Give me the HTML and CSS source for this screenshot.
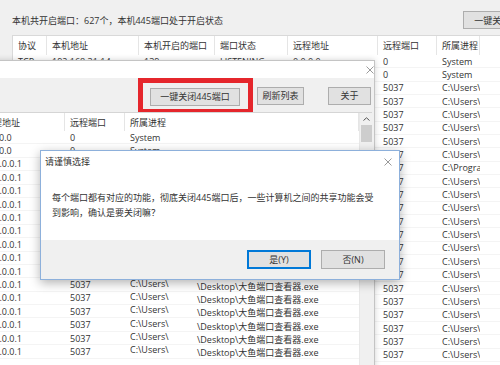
FILE: index.html
```html
<!DOCTYPE html>
<html>
<head>
  <meta charset="utf-8">
  <link rel="stylesheet" href="styles.css">
</head>
<body>
  <!-- Main window (behind) -->
  <div class="main">
    <div class="topbar">
      <div class="summary">本机共开启端口：627个，本机445端口处于开启状态</div>
      <button class="btn top-btn">一键关闭445端口</button>
    </div>
    <div class="ports">
      <div class="row head">
        <div>协议</div><div>本机地址</div><div>本机开启的端口</div><div>端口状态</div><div>远程地址</div><div>远程端口</div><div>所属进程</div><div></div>
      </div>
      <div class="row"><div>TCP</div><div>192.168.31.14</div><div>139</div><div>LISTENING</div><div>0.0.0.0</div><div>0</div><div>System</div><div></div></div>
      <div class="row"><div>TCP</div><div>0.0.0.0</div><div>135</div><div>LISTENING</div><div>0.0.0.0</div><div>0</div><div>System</div><div></div></div>
      <div class="row"><div>TCP</div><div>127.0.0.1</div><div>50112</div><div>ESTABLISHED</div><div>127.0.0.1</div><div>5037</div><div>C:\Users\</div><div></div></div>
      <div class="row"><div>TCP</div><div>127.0.0.1</div><div>50114</div><div>ESTABLISHED</div><div>127.0.0.1</div><div>5037</div><div>C:\Users\</div><div></div></div>
      <div class="row"><div>TCP</div><div>127.0.0.1</div><div>50117</div><div>ESTABLISHED</div><div>127.0.0.1</div><div>5037</div><div>C:\Users\</div><div></div></div>
      <div class="row"><div>TCP</div><div>127.0.0.1</div><div>50121</div><div>ESTABLISHED</div><div>127.0.0.1</div><div>5037</div><div>C:\Users\</div><div></div></div>
      <div class="row"><div>TCP</div><div>127.0.0.1</div><div>50125</div><div>ESTABLISHED</div><div>127.0.0.1</div><div>5037</div><div>C:\Users\</div><div></div></div>
      <div class="row"><div>TCP</div><div>127.0.0.1</div><div>50128</div><div>ESTABLISHED</div><div>127.0.0.1</div><div>5037</div><div>C:\Users\</div><div></div></div>
      <div class="row"><div>TCP</div><div>127.0.0.1</div><div>50133</div><div>ESTABLISHED</div><div>127.0.0.1</div><div>5037</div><div>C:\Program Files\</div><div></div></div>
      <div class="row"><div>TCP</div><div>127.0.0.1</div><div>50136</div><div>ESTABLISHED</div><div>127.0.0.1</div><div>5037</div><div>C:\Users\</div><div></div></div>
      <div class="row"><div>TCP</div><div>127.0.0.1</div><div>50140</div><div>ESTABLISHED</div><div>127.0.0.1</div><div>5037</div><div>C:\Users\</div><div></div></div>
      <div class="row"><div>TCP</div><div>127.0.0.1</div><div>50143</div><div>ESTABLISHED</div><div>127.0.0.1</div><div>5037</div><div>C:\Users\</div><div></div></div>
      <div class="row"><div>TCP</div><div>127.0.0.1</div><div>50147</div><div>ESTABLISHED</div><div>127.0.0.1</div><div>5037</div><div>C:\Users\</div><div></div></div>
      <div class="row"><div>TCP</div><div>127.0.0.1</div><div>50150</div><div>ESTABLISHED</div><div>127.0.0.1</div><div>5037</div><div>C:\Users\</div><div></div></div>
      <div class="row"><div>TCP</div><div>127.0.0.1</div><div>50154</div><div>ESTABLISHED</div><div>127.0.0.1</div><div>5037</div><div>C:\Users\</div><div></div></div>
      <div class="row"><div>TCP</div><div>127.0.0.1</div><div>50158</div><div>ESTABLISHED</div><div>127.0.0.1</div><div>5037</div><div>C:\Users\</div><div></div></div>
      <div class="row"><div>TCP</div><div>127.0.0.1</div><div>50161</div><div>ESTABLISHED</div><div>127.0.0.1</div><div>5037</div><div>C:\Users\</div><div></div></div>
      <div class="row"><div>TCP</div><div>127.0.0.1</div><div>50165</div><div>ESTABLISHED</div><div>127.0.0.1</div><div>5037</div><div>C:\Users\</div><div></div></div>
      <div class="row"><div>TCP</div><div>127.0.0.1</div><div>50168</div><div>ESTABLISHED</div><div>127.0.0.1</div><div>5037</div><div>C:\Users\</div><div></div></div>
      <div class="row"><div>TCP</div><div>127.0.0.1</div><div>50172</div><div>ESTABLISHED</div><div>127.0.0.1</div><div>5037</div><div>C:\Users\</div><div></div></div>
      <div class="row"><div>TCP</div><div>127.0.0.1</div><div>50175</div><div>ESTABLISHED</div><div>127.0.0.1</div><div>5037</div><div>C:\Users\</div><div></div></div>
      <div class="row"><div>TCP</div><div>127.0.0.1</div><div>50179</div><div>ESTABLISHED</div><div>127.0.0.1</div><div>5037</div><div>C:\Users\</div><div></div></div>
      <div class="row"><div>TCP</div><div>127.0.0.1</div><div>50182</div><div>ESTABLISHED</div><div>127.0.0.1</div><div>5037</div><div>C:\Users\</div><div></div></div>
      <div class="row"><div>TCP</div><div>127.0.0.1</div><div>50186</div><div>ESTABLISHED</div><div>127.0.0.1</div><div>5037</div><div>C:\Users\</div><div></div></div>
    </div>
  </div>

  <!-- Port list window -->
  <div class="window">
    <div class="titlebar">
      <svg class="close" width="8" height="8" viewBox="0 0 8 8"><path d="M0.5 0.5L7.5 7.5M7.5 0.5L0.5 7.5"/></svg>
    </div>
    <div class="toolbar">
      <div class="mark"><button class="btn wide">一键关闭445端口</button></div>
      <button class="btn refresh">刷新列表</button>
      <button class="btn about">关于</button>
    </div>
    <div class="list">
      <div class="list-body">
        <div class="row head"><div>远程地址</div><div>远程端口</div><div>所属进程</div></div>
        <div class="row"><div>0.0.0.0</div><div>0</div><div>System</div></div>
        <div class="row"><div>0.0.0.0</div><div>0</div><div>System</div></div>
        <div class="row"><div>127.0.0.1</div><div>5037</div><div><span class="user">C:\Users\</span>\Desktop\大鱼端口查看器.exe</div></div>
        <div class="row"><div>127.0.0.1</div><div>5037</div><div><span class="user">C:\Users\</span>\Desktop\大鱼端口查看器.exe</div></div>
        <div class="row"><div>127.0.0.1</div><div>5037</div><div><span class="user">C:\Users\</span>\Desktop\大鱼端口查看器.exe</div></div>
        <div class="row"><div>127.0.0.1</div><div>5037</div><div><span class="user">C:\Users\</span>\Desktop\大鱼端口查看器.exe</div></div>
        <div class="row"><div>127.0.0.1</div><div>5037</div><div><span class="user">C:\Users\</span>\Desktop\大鱼端口查看器.exe</div></div>
        <div class="row"><div>127.0.0.1</div><div>5037</div><div><span class="user">C:\Users\</span>\Desktop\大鱼端口查看器.exe</div></div>
        <div class="row"><div>127.0.0.1</div><div>5037</div><div><span class="user">C:\Users\</span>\Desktop\大鱼端口查看器.exe</div></div>
        <div class="row"><div>127.0.0.1</div><div>5037</div><div><span class="user">C:\Users\</span>\Desktop\大鱼端口查看器.exe</div></div>
        <div class="row"><div>127.0.0.1</div><div>5037</div><div><span class="user">C:\Users\</span>\Desktop\大鱼端口查看器.exe</div></div>
        <div class="row"><div>127.0.0.1</div><div>5037</div><div><span class="user">C:\Users\</span>\Desktop\大鱼端口查看器.exe</div></div>
        <div class="row"><div>127.0.0.1</div><div>5037</div><div><span class="user">C:\Users\</span>\Desktop\大鱼端口查看器.exe</div></div>
        <div class="row"><div>127.0.0.1</div><div>5037</div><div><span class="user">C:\Users\</span>\Desktop\大鱼端口查看器.exe</div></div>
        <div class="row"><div>127.0.0.1</div><div>5037</div><div><span class="user">C:\Users\</span>\Desktop\大鱼端口查看器.exe</div></div>
        <div class="row"><div>127.0.0.1</div><div>5037</div><div><span class="user">C:\Users\</span>\Desktop\大鱼端口查看器.exe</div></div>
        <div class="row"><div>127.0.0.1</div><div>5037</div><div><span class="user">C:\Users\</span>\Desktop\大鱼端口查看器.exe</div></div>
      </div>
      <div class="scrollbar">
        <svg class="arrow" width="7" height="4" viewBox="0 0 7 4"><path d="M0.5 3.5L3.5 0.8L6.5 3.5"/></svg>
        <div class="thumb"></div>
      </div>
    </div>
  </div>

  <!-- Confirm dialog -->
  <div class="dialog">
    <div class="dialog-title">
      <span>请谨慎选择</span>
      <svg class="close" width="8" height="8" viewBox="0 0 8 8"><path d="M0.5 0.5L7.5 7.5M7.5 0.5L0.5 7.5"/></svg>
    </div>
    <div class="dialog-body">每个端口都有对应的功能，彻底关闭445端口后，一些计算机之间的共享功能会受<br>到影响，确认是要关闭嘛？</div>
    <div class="dialog-foot">
      <button class="btn primary">是(Y)</button>
      <button class="btn">否(N)</button>
    </div>
  </div>
</body>
</html>
```

FILE: styles.css
```css
/* Base */
* {
  box-sizing: border-box;
}

body {
  margin: 0;
  width: 500px;
  height: 365px;
  overflow: hidden;
  position: relative;
  font-family: "Open Sans", "Noto Sans CJK SC", sans-serif;
  font-size: 9px;
  color: #333;
  background: #f0f0f0;
}

.btn {
  height: 18px;
  padding: 0;
  font: inherit;
  color: #333;
  background: #e1e1e1;
  border: 1px solid #adadad;
}

.row > div {
  padding-left: 5px;
  overflow: hidden;
  white-space: nowrap;
}

.close path,
.arrow path {
  fill: none;
  stroke: #9a9a9a;
  stroke-width: 1;
}

/* Main window */
.main {
  width: 570px;
  height: 365px;
  display: flex;
  flex-direction: column;
}

.topbar {
  height: 35px;
  flex: none;
  display: flex;
  align-items: center;
  padding: 5px 15px 0 12px;
}

.summary {
  flex: 1;
}

.top-btn {
  width: 92px;
}

.ports {
  flex: 1;
  margin-left: 12px;
  background: #fff;
  border-left: 1px solid #d9d9d9;
  border-top: 1px solid #d9d9d9;
}

.ports .row {
  display: grid;
  grid-template-columns: 34px 92px 76px 73px 90px 59px 43px 1fr;
  align-items: center;
  height: 13.35px;
  border-bottom: 1px solid #f4f4f4;
}

.ports .head {
  height: 19px;
  align-items: stretch;
  border-bottom: none;
}

.head > div {
  display: flex;
  align-items: center;
  border-right: 1px solid #e5e5e5;
}

/* Port list window */
.window {
  position: absolute;
  left: -25px;
  top: 60px;
  width: 400px;
  height: 330px;
  display: flex;
  flex-direction: column;
  background: #f0f0f0;
  border: 1px solid #c4c4c4;
  box-shadow: 0 0 6px rgba(0, 0, 0, 0.18);
}

.titlebar {
  height: 17px;
  flex: none;
  display: flex;
  align-items: center;
  justify-content: flex-end;
  background: #fff;
}

.toolbar {
  height: 34px;
  flex: none;
  display: flex;
  align-items: center;
  justify-content: flex-end;
  padding: 1px 3px 0 0;
}

.mark {
  border: 5px solid #e5262c;
  padding: 5px 8px 3px 7px;
}

.wide {
  width: 90px;
}

.refresh {
  width: 47px;
  margin-left: 4px;
}

.about {
  width: 43px;
  margin-left: 24px;
}

.list {
  flex: 1;
  display: flex;
  margin-right: 2px;
  background: #fff;
  border-top: 1px solid #d5d5d5;
}

.list-body {
  flex: 1;
  overflow: hidden;
}

.list-body .row {
  display: grid;
  grid-template-columns: 89px 60px 1fr;
  align-items: center;
  height: 13.4px;
  border-bottom: 1px solid #f4f4f4;
}

.list-body .row > div:first-child {
  padding-left: 8px;
}

.list-body .head {
  height: 18px;
  align-items: stretch;
  border-bottom: none;
}

.user {
  display: inline-block;
  width: 67px;
  overflow: hidden;
}

.scrollbar {
  width: 13px;
  display: flex;
  flex-direction: column;
  align-items: center;
  background: #f0f0f0;
  border-left: 1px solid #e8e8e8;
}

.arrow {
  margin-top: 4px;
}

.arrow path {
  stroke: #555;
}

.thumb {
  width: 11px;
  height: 17px;
  margin-top: 4px;
  background: #cdcdcd;
}

/* Confirm dialog */
.dialog {
  position: absolute;
  left: 40px;
  top: 150px;
  width: 360px;
  height: 130px;
  display: flex;
  flex-direction: column;
  background: #fff;
  border: 1px solid #8db0db;
  box-shadow: 0 3px 10px rgba(0, 0, 0, 0.3);
}

.dialog-title {
  height: 21px;
  flex: none;
  display: flex;
  align-items: center;
  justify-content: space-between;
  padding: 0 7px 0 4px;
}

.dialog-body {
  flex: 1;
  padding: 18px 0 0 11px;
  line-height: 15px;
}

.dialog-foot {
  height: 39px;
  flex: none;
  display: flex;
  align-items: center;
  justify-content: flex-end;
  gap: 10px;
  padding-right: 14px;
  background: #f0f0f0;
}

.dialog-foot .btn {
  width: 64px;
  height: 19px;
}

.btn.primary {
  border-color: #0078d7;
  box-shadow: inset 0 0 0 1px #0078d7;
}
```
